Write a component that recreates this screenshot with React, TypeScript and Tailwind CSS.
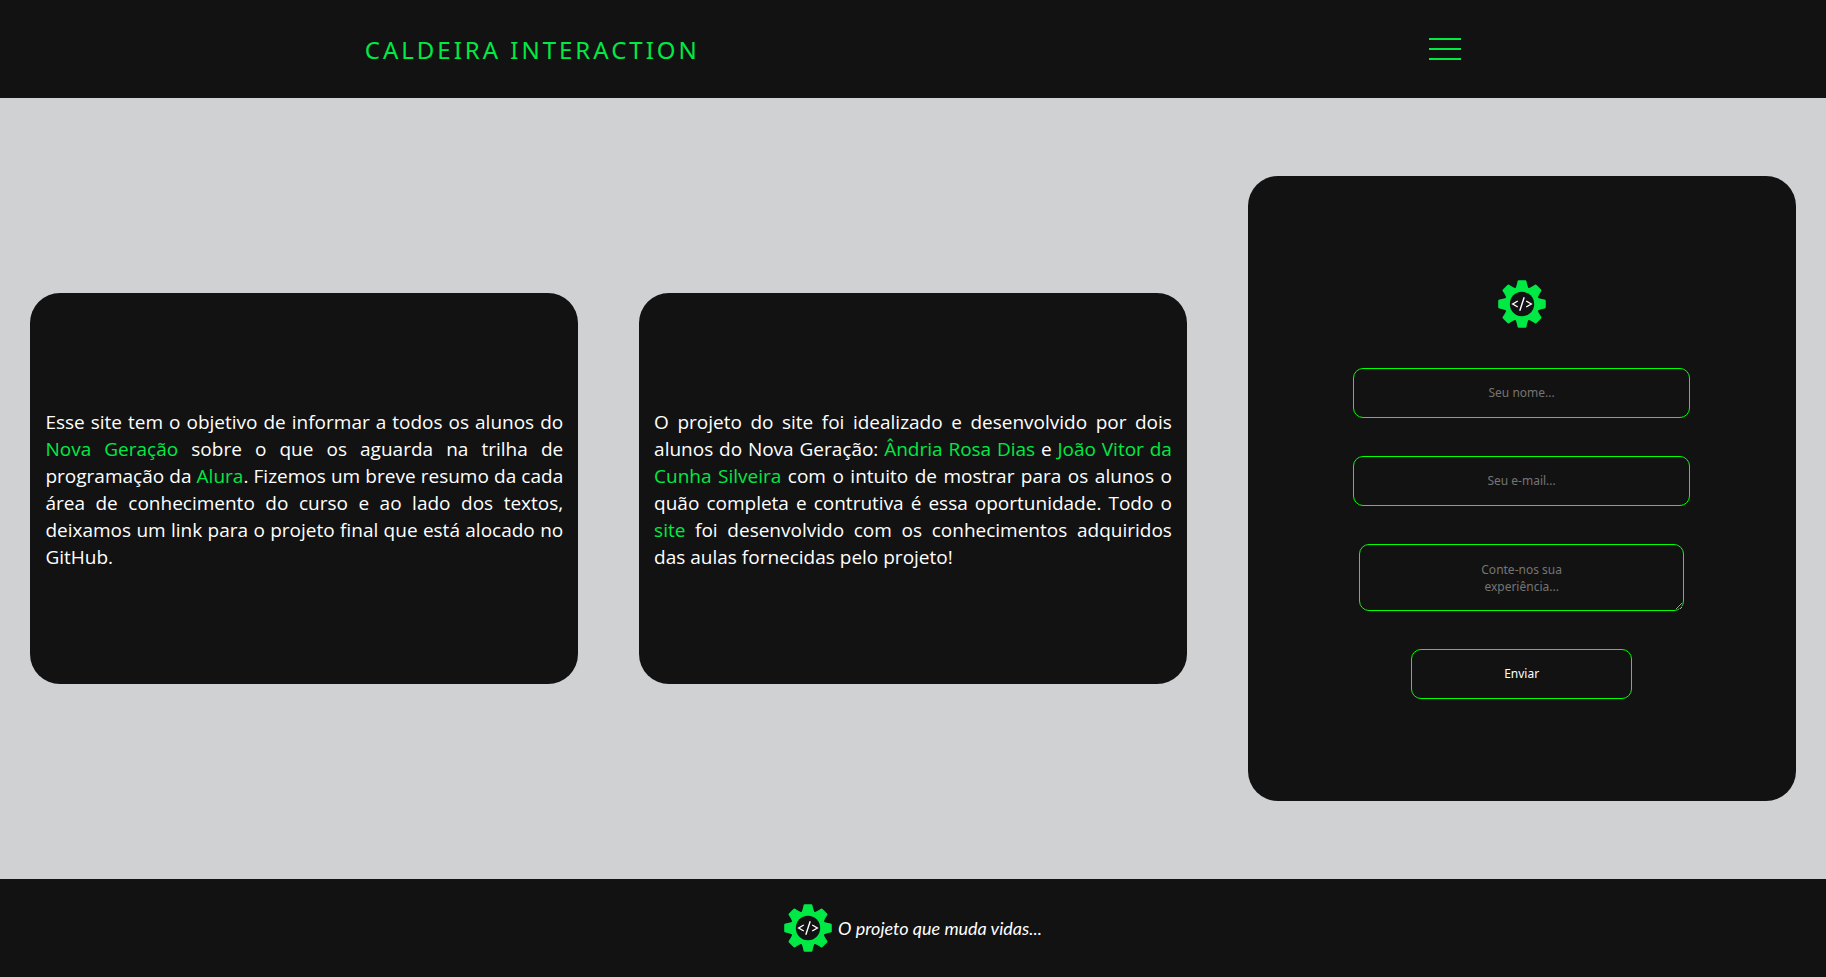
import type { ReactNode } from "react";

const TEETH = [0, 45, 90, 135, 180, 225, 270, 315];

function GearLogo() {
  return (
    <svg viewBox="-24 -24 48 48" className="size-12 shrink-0" role="img" aria-label="Caldeira Interaction">
      <g fill="#00e945">
        {TEETH.map((angle) => (
          <path
            key={angle}
            transform={`rotate(${angle})`}
            d="M-7.6 -14 Q-5.6 -17 -5 -20 L-4.5 -22.7 Q-4.2 -23.8 -3.2 -23.8 H3.2 Q4.2 -23.8 4.5 -22.7 L5 -20 Q5.6 -17 7.6 -14 Z"
          />
        ))}
        <circle r="17" />
      </g>
      <circle r="12.2" fill="#121212" />
      <g fill="none" stroke="#fff" strokeWidth="1.4">
        <path d="M-4.2 -3 L-9.3 0 L-4.2 3" />
        <path d="M4.2 -3 L9.3 0 L4.2 3" />
        <path d="M2.2 -6.8 L-2.2 6.8" />
      </g>
    </svg>
  );
}

function Accent({ children }: { children: ReactNode }) {
  return (
    <a href="#" className="text-[#00e945]">
      {children}
    </a>
  );
}

function TextCard({ children }: { children: ReactNode }) {
  return (
    <article className="flex h-[40vh] w-[30vw] items-center rounded-[30px] bg-[#121212] px-[15px] pt-1">
      <p className="text-justify font-['Open_Sans','Noto_Sans',sans-serif] text-[19px] leading-[27px] text-white">
        {children}
      </p>
    </article>
  );
}

export default function App() {
  return (
    <div className="flex min-h-screen flex-col bg-[#d0d1d3] font-['Noto_Sans',sans-serif]">
      <header className="flex h-[10vh] items-center justify-around bg-[#121212]">
        <h1 className="pt-0.5 text-[24px] leading-8 tracking-[3px] text-[#00e945]">CALDEIRA INTERACTION</h1>
        <button type="button" aria-label="Menu" className="flex w-8 flex-col gap-2">
          <span className="h-0.5 w-full bg-[#00e945]" />
          <span className="h-0.5 w-full bg-[#00e945]" />
          <span className="h-0.5 w-full bg-[#00e945]" />
        </button>
      </header>

      <main className="flex flex-1 items-center justify-around">
        <TextCard>
          Esse site tem o objetivo de informar a todos os alunos do <Accent>Nova Geração</Accent> sobre o que os
          aguarda na trilha de programação da <Accent>Alura</Accent>. Fizemos um breve resumo da cada área de
          conhecimento do curso e ao lado dos textos, deixamos um link para o projeto final que está alocado no
          GitHub.
        </TextCard>
        <TextCard>
          O projeto do site foi idealizado e desenvolvido por dois alunos do Nova Geração:{" "}
          <Accent>Ândria Rosa Dias</Accent> e <Accent>João Vitor da Cunha Silveira</Accent> com o intuito de mostrar
          para os alunos o quão completa e contrutiva é essa oportunidade. Todo o <Accent>site</Accent> foi
          desenvolvido com os conhecimentos adquiridos das aulas fornecidas pelo projeto!
        </TextCard>
        <form className="flex h-[64vh] w-[30vw] flex-col items-center justify-center gap-[38px] rounded-[30px] bg-[#121212] pt-0.5 text-[12px] leading-[17px]">
          <div className="pb-0.5">
            <GearLogo />
          </div>
          <input
            type="text"
            aria-label="Seu nome"
            placeholder="Seu nome..."
            className="h-[50px] w-[337px] rounded-[10px] border border-[#00ff00] text-center text-white placeholder:text-[#757575]"
          />
          <input
            type="email"
            aria-label="Seu e-mail"
            placeholder="Seu e-mail..."
            className="h-[50px] w-[337px] rounded-[10px] border border-[#00ff00] text-center text-white placeholder:text-[#757575]"
          />
          <textarea
            aria-label="Conte-nos sua experiência"
            placeholder="Conte-nos sua experiência..."
            className="h-[67px] w-[325px] rounded-[10px] border border-[#00ff00] px-[100px] py-4 text-center text-white placeholder:text-[#757575]"
          />
          <button type="submit" className="h-[50px] w-[221px] rounded-[10px] border border-[#00ff00] text-white">
            Enviar
          </button>
        </form>
      </main>

      <footer className="flex h-[10vh] items-center justify-center gap-1.5 bg-[#121212]">
        <GearLogo />
        <p className="font-['Lato',sans-serif] text-[18px] leading-7 text-white italic">
          O projeto que muda vidas...
        </p>
      </footer>
    </div>
  );
}
